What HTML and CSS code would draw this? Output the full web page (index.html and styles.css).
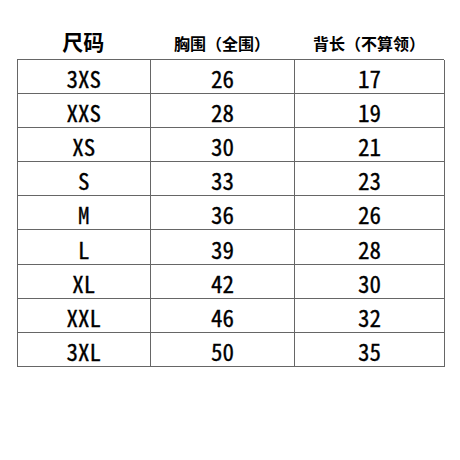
FILE: index.html
```html
<!DOCTYPE html>
<html lang="zh">
<head>
<meta charset="utf-8">
<link rel="stylesheet" href="styles.css">
</head>
<body>
<div class="page">
  <div class="head">
    <div class="h h-size">尺码</div>
    <div class="h">胸围（全围）</div>
    <div class="h">背长（不算领）</div>
  </div>
  <div class="grid">
    <div class="c">3XS</div><div class="c">26</div><div class="c">17</div>
    <div class="c">XXS</div><div class="c">28</div><div class="c">19</div>
    <div class="c">XS</div><div class="c">30</div><div class="c">21</div>
    <div class="c">S</div><div class="c">33</div><div class="c">23</div>
    <div class="c">M</div><div class="c">36</div><div class="c">26</div>
    <div class="c">L</div><div class="c">39</div><div class="c">28</div>
    <div class="c">XL</div><div class="c">42</div><div class="c">30</div>
    <div class="c">XXL</div><div class="c">46</div><div class="c">32</div>
    <div class="c">3XL</div><div class="c">50</div><div class="c">35</div>
  </div>
</div>
</body>
</html>
```
FILE: styles.css
```css
html, body {
  margin: 0;
  padding: 0;
  background: #fff;
}
.page {
  width: 460px;
  height: 460px;
  padding-left: 16.5px;
  box-sizing: border-box;
  font-family: "Noto Sans CJK SC", sans-serif;
  color: #000;
}
.head {
  display: grid;
  grid-template-columns: 133.5px 144px 150px;
  height: 59px;
  align-items: end;
}
.h {
  text-align: center;
  font-size: 16px;
  font-weight: 700;
  line-height: 20px;
  padding-bottom: 6px;
}
.h-size {
  font-size: 21px;
  line-height: 24px;
  padding-bottom: 6px;
}
.grid {
  display: grid;
  grid-template-columns: 133.5px 144px 150px;
  grid-auto-rows: 34.2px;
  border-top: 1px solid #666;
  border-left: 1px solid #666;
  width: 427.5px;
  box-sizing: border-box;
  margin-top: -0.5px;
}
.c {
  border-right: 1px solid #666;
  border-bottom: 1px solid #666;
  box-sizing: border-box;
  display: flex;
  align-items: center;
  justify-content: center;
  font-size: 23px;
  font-weight: 400;
  -webkit-text-stroke: 0.3px #000;
  font-feature-settings: "hwid" 1;
  padding-top: 3px;
}
```
